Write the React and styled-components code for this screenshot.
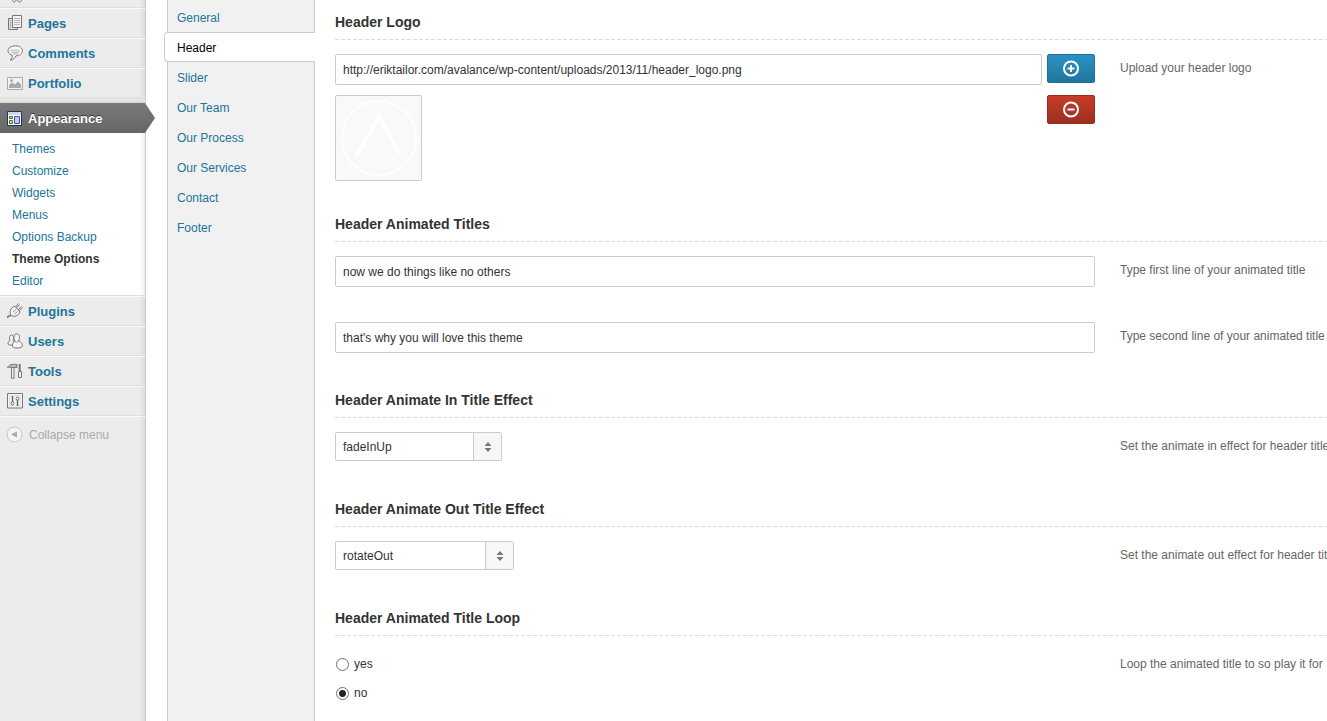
import React, { useState } from "react";
import styled, { createGlobalStyle, css } from "styled-components";

const GlobalStyle = createGlobalStyle`
  *, *::before, *::after { box-sizing: border-box; }
  body {
    margin: 0;
    background: #fff;
    color: #333;
    font-family: "Liberation Sans", Arial, sans-serif;
    font-size: 12px;
    overflow: hidden;
  }
  ul { list-style: none; margin: 0; padding: 0; }
  a { text-decoration: none; }
`;

const Page = styled.div`
  display: flex;
  min-height: 100vh;
`;

const Sidebar = styled.nav`
  flex: none;
  width: 146px;
  background: #ececec;
  border-right: 1px solid #ccc;
  box-shadow: inset -6px 0 6px -6px rgba(0, 0, 0, 0.16);
`;

const CutItem = styled.div`
  height: 8px;
  padding-left: 12px;
  border-bottom: 1px solid #dfdfdf;
  svg { display: block; }
`;

const menuRow = css`
  display: flex;
  align-items: center;
  gap: 5px;
  height: 30px;
  padding-left: 7px;
  font-size: 13px;
  font-weight: bold;
  svg { flex: none; }
`;

const MenuLink = styled.a`
  ${menuRow}
  color: #21759b;
  border-top: 1px solid #f9f9f9;
  border-bottom: 1px solid #dfdfdf;
`;

const Divider = styled.div`
  height: 5px;
  border-bottom: 1px solid #d4d4d4;
  background: #e4e4e4;
`;

const CurrentLink = styled.a`
  ${menuRow}
  position: relative;
  color: #fff;
  text-shadow: 0 -1px 0 #333;
  background: linear-gradient(#7a7a7a, #666);
  &::after {
    content: "";
    position: absolute;
    left: 100%;
    top: 0;
    width: 10px;
    height: 30px;
    background: inherit;
    clip-path: polygon(0 0, 100% 50%, 0 100%);
  }
`;

const Submenu = styled.ul`
  padding: 5px 0 3px;
  background: #fff;
  border-bottom: 1px solid #dfdfdf;
  box-shadow: inset -6px 0 6px -6px rgba(0, 0, 0, 0.16);
`;

const SubLink = styled.a`
  display: block;
  padding-left: 12px;
  line-height: 22px;
  color: ${(p) => (p.$current ? "#333" : "#21759b")};
  font-weight: ${(p) => (p.$current ? "bold" : "normal")};
`;

const Collapse = styled.button`
  display: flex;
  align-items: center;
  gap: 5px;
  width: 100%;
  height: 36px;
  padding: 0 0 0 6px;
  border: 0;
  border-top: 1px solid #f9f9f9;
  background: none;
  font: inherit;
  color: #aaa;
`;

const Tabs = styled.ul`
  flex: none;
  width: 148px;
  margin-left: 21px;
  padding-top: 2px;
  background: #f1f1f1;
  border: solid #ccc;
  border-width: 0 1px;
`;

const Tab = styled.a`
  display: block;
  height: 30px;
  padding-left: 9px;
  line-height: 32px;
  color: #21759b;
  ${(p) =>
    p.$current &&
    css`
      margin: 0 -1px 0 -4px;
      padding-left: 12px;
      line-height: 30px;
      color: #000;
      background: #fff;
      border: 1px solid #ccc;
      border-right: 0;
      border-radius: 4px 0 0 4px;
    `}
`;

const Content = styled.main`
  flex: 1;
  min-width: 0;
  padding: 10px 0 0 20px;
`;

const Heading = styled.h2`
  height: 30px;
  margin: 0 0 14px;
  padding-bottom: 6px;
  font-size: 14px;
  line-height: 24px;
  background: repeating-linear-gradient(90deg, #ddd 0 4px, transparent 4px 6px) bottom / 100% 1px no-repeat;
`;

const Field = styled.div`
  display: grid;
  grid-template-columns: minmax(0, 1fr) 207px;
  gap: 25px;
  margin-bottom: ${(p) => p.$gap || 35}px;
`;

const Hint = styled.p`
  margin: 0;
  padding-top: 4px;
  line-height: 20px;
  color: #666;
  white-space: nowrap;
`;

const TextInput = styled.input`
  display: block;
  width: 100%;
  height: 31px;
  padding: 0 7px;
  border: 1px solid #ccc;
  border-radius: 2px;
  background: #fff;
  font: inherit;
  color: #333;
`;

const Upload = styled.div`
  display: grid;
  grid-template-columns: minmax(0, 1fr) 48px;
  align-items: start;
  gap: 10px 5px;
`;

const IconButton = styled.button`
  display: flex;
  align-items: center;
  justify-content: center;
  height: 29px;
  padding: 0;
  border: 1px solid ${(p) => (p.$danger ? "#9a2b1e" : "#1f7099")};
  border-radius: 2px;
  background: ${(p) =>
    p.$danger ? "linear-gradient(#c83c28, #9a2f22)" : "linear-gradient(#2a93c4, #21759b)"};
`;

const Preview = styled.div`
  width: 87px;
  height: 86px;
  border: 1px solid #ccc;
  border-radius: 2px;
  background: #f9f9f9;
  svg { display: block; }
`;

const SelectBox = styled.div`
  display: grid;
  grid-template-columns: 1fr 28px;
  width: ${(p) => p.$width}px;
  height: 29px;
  margin-bottom: 1px;
  border: 1px solid #ccc;
  border-radius: 2px;
  background: #fff;
`;

const Select = styled.select`
  grid-area: 1 / 1 / 2 / 3;
  appearance: none;
  padding: 0 7px;
  border: 0;
  background: none;
  font: inherit;
  color: #333;
`;

const Arrows = styled.span`
  grid-area: 1 / 2;
  display: flex;
  align-items: center;
  justify-content: center;
  border-left: 1px solid #ccc;
  background: #f7f7f7;
  pointer-events: none;
`;

const Radios = styled.div`
  display: grid;
  gap: 9px;
  padding: 4px 0 0 1px;
`;

const RadioLabel = styled.label`
  display: flex;
  align-items: center;
  gap: 5px;
  line-height: 20px;
`;

const Radio = styled.input`
  appearance: none;
  width: 13px;
  height: 13px;
  margin: 0;
  border: 1px solid #707070;
  border-radius: 50%;
  background: #fff;
  &:checked {
    background: radial-gradient(circle, #222 0 3px, #fff 4px);
  }
`;

const Icon = ({ children }) => (
  <svg width="16" height="16" viewBox="0 0 16 16" fill="none" stroke="#777" aria-hidden="true">
    {children}
  </svg>
);

const icons = {
  pages: (
    <Icon>
      <path d="M5 3.500H1.500V14.500H10.500V13" fill="#ddd" />
      <path d="M5.500 0.500H14.500V12.500H5.500Z" fill="#f4f4f4" />
      <path d="M7 3.500H13M7 5.500H13M7 7.500H13M7 9.500H13M3.500 5V13" stroke="#b4b4b4" />
    </Icon>
  ),
  comments: (
    <Icon>
      <path d="M8.500 0.800C13 0.800 15.400 3 15.400 5.800C15.400 8.600 13 10.800 9 10.800C8 13.200 6.500 14.800 3 15.200C5 13.800 5.600 12.200 5.200 10.200C2.500 9.400 1 8 1 5.800C1 3 4 0.800 8.500 0.800Z" fill="#f6f6f6" />
      <path d="M3.500 5.500H13M4 7.500H12.500M6 9H11" stroke="#ccc" strokeWidth="1.500" />
    </Icon>
  ),
  portfolio: (
    <Icon>
      <path d="M0.500 2.500H15.500V14.500H0.500Z" fill="#f2f2f2" stroke="#aaa" />
      <path d="M2 13V10L5 7.500L8 9.500L11 6.500L14 9.500V13Z" fill="#aaa" stroke="none" />
      <circle cx="4.500" cy="5.500" r="1.500" fill="#aaa" stroke="none" />
    </Icon>
  ),
  appearance: (
    <Icon>
      <path d="M0.500 1.500H14.500V15.500H0.500Z" fill="#fff" stroke="#23355c" />
      <path d="M1 2H14V5H1Z" fill="#c9d8f0" stroke="none" />
      <path d="M2.500 6.500H5.500V8.500H2.500ZM2.500 10.500H5.500V13.500H2.500Z" fill="#b4e48a" stroke="#3e7a38" />
      <path d="M7.500 6.500H12.500V13.500H7.500Z" fill="#c4c8f6" stroke="#4650a0" />
    </Icon>
  ),
  plugins: (
    <Icon>
      <path d="M0.500 15C1 11.500 3 14 4.500 11.500" strokeWidth="1.500" />
      <path d="M4 12.500C2 9 3.500 5 7.500 3L13 9C11.500 12.500 7.500 14.500 4 12.500Z" fill="#f4f4f4" />
      <path d="M9 4.500L12 1M11.500 7.500L15 4" strokeWidth="2" />
      <path d="M9 4.500L12 1M11.500 7.500L15 4" stroke="#ddd" strokeWidth="1" />
      <path d="M6 9L9 6.500M7.500 11L10.500 8.500" stroke="#999" />
    </Icon>
  ),
  users: (
    <Icon>
      <path d="M6 12H2C0.500 11 0.500 8.500 3 7.500C1.800 5 2.500 2 4.500 2C6.500 2 7.200 4.500 6 7.500L8 9Z" fill="#f4f4f4" />
      <path d="M8 8C6 4.500 7 0.800 9.800 0.800C12.600 0.800 13.200 4.800 11.500 8C14.500 9 16 11 15.200 13.500C13 15.600 7.500 15.600 5.500 13.500C5 11 6 9 8 8Z" fill="#f4f4f4" />
      <path d="M8 8.500C9.500 9.500 10.500 9.500 11.500 8.500" stroke="#999" />
    </Icon>
  ),
  tools: (
    <Icon>
      <path d="M0.500 4.500C2 1.500 5 1 10 1.500V4.500H3C2 4 1.500 4.500 0.500 4.500Z" fill="#bbb" />
      <path d="M4.500 4.500H7V15.300H4.500Z" fill="#f2f2f2" />
      <path d="M12.700 1V8" strokeWidth="2" />
      <path d="M11.500 8.500H14.500V14.500H11.500Z" fill="#f2f2f2" />
    </Icon>
  ),
  settings: (
    <Icon>
      <path d="M0.500 0.500H15.500V15H0.500Z" fill="#f6f6f6" />
      <path d="M2.500 2.500H13.500V13H2.500Z" stroke="#ddd" />
      <path d="M5.500 3V9M10.500 7V13" stroke="#666" strokeWidth="1.500" />
      <circle cx="5.500" cy="10.500" r="1.500" fill="#fff" stroke="#666" />
      <circle cx="10.500" cy="5.500" r="1.500" fill="#fff" stroke="#666" />
    </Icon>
  ),
};

const RoundSign = ({ plus }) => (
  <svg width="18" height="18" viewBox="0 0 18 18" fill="none" stroke="#fff" strokeWidth="2" aria-hidden="true">
    <circle cx="9" cy="8.500" r="7" />
    <path d={plus ? "M5.500 8.500H12.500M9 5V12" : "M5.500 8.500H12.500"} />
  </svg>
);

const MenuItem = ({ icon, children }) => (
  <li>
    <MenuLink href="#">
      {icons[icon]}
      {children}
    </MenuLink>
  </li>
);

const Dropdown = ({ id, width, options }) => (
  <SelectBox $width={width}>
    <Arrows>
      <svg width="8" height="12" viewBox="0 0 8 12" fill="#777" aria-hidden="true">
        <path d="M4 1L7.500 5H0.500ZM4 11L7.500 7H0.500Z" />
      </svg>
    </Arrows>
    <Select id={id}>
      {options.map((o) => (
        <option key={o}>{o}</option>
      ))}
    </Select>
  </SelectBox>
);

const submenu = ["Themes", "Customize", "Widgets", "Menus", "Options Backup", "Theme Options", "Editor"];
const tabs = ["General", "Header", "Slider", "Our Team", "Our Process", "Our Services", "Contact", "Footer"];

export default function App() {
  const [loop, setLoop] = useState("no");
  return (
    <>
      <GlobalStyle />
      <Page>
        <Sidebar>
          <CutItem>
            <svg width="10" height="3" viewBox="0 0 10 3" fill="none" stroke="#777" aria-hidden="true">
              <path d="M0.500 0C0.500 2.500 4 2.500 4 0M5.500 0C5.500 2.500 9.500 2.500 9.500 0" />
            </svg>
          </CutItem>
          <ul>
            <MenuItem icon="pages">Pages</MenuItem>
            <MenuItem icon="comments">Comments</MenuItem>
            <MenuItem icon="portfolio">Portfolio</MenuItem>
          </ul>
          <Divider />
          <CurrentLink href="#">
            {icons.appearance}
            Appearance
          </CurrentLink>
          <Submenu>
            {submenu.map((s) => (
              <li key={s}>
                <SubLink href="#" $current={s === "Theme Options"}>{s}</SubLink>
              </li>
            ))}
          </Submenu>
          <ul>
            <MenuItem icon="plugins">Plugins</MenuItem>
            <MenuItem icon="users">Users</MenuItem>
            <MenuItem icon="tools">Tools</MenuItem>
            <MenuItem icon="settings">Settings</MenuItem>
          </ul>
          <Collapse type="button">
            <svg width="18" height="18" viewBox="0 0 18 18" aria-hidden="true">
              <circle cx="8.500" cy="8.500" r="7.500" fill="#f4f4f4" stroke="#c4c4c4" />
              <path d="M11 5.500V11.500L5 8.500Z" fill="#aaa" />
            </svg>
            Collapse menu
          </Collapse>
        </Sidebar>

        <Tabs>
          {tabs.map((t) => (
            <li key={t}>
              <Tab href="#" $current={t === "Header"}>{t}</Tab>
            </li>
          ))}
        </Tabs>

        <Content>
          <Heading>Header Logo</Heading>
          <Field $gap={31}>
            <Upload>
              <TextInput
                id="logo"
                defaultValue="http://eriktailor.com/avalance/wp-content/uploads/2013/11/header_logo.png"
              />
              <IconButton type="button" aria-label="Add"><RoundSign plus /></IconButton>
              <Preview>
                <svg width="85" height="84" viewBox="0 0 85 84" fill="none" stroke="#fff" aria-hidden="true">
                  <circle cx="43" cy="42" r="37" strokeWidth="2" />
                  <path d="M20 60L43 21L64 58" strokeWidth="4" />
                </svg>
              </Preview>
              <IconButton type="button" aria-label="Remove" $danger><RoundSign /></IconButton>
            </Upload>
            <Hint as="label" htmlFor="logo">Upload your header logo</Hint>
          </Field>

          <Heading>Header Animated Titles</Heading>
          <Field>
            <TextInput id="first" defaultValue="now we do things like no others" />
            <Hint as="label" htmlFor="first">Type first line of your animated title</Hint>
          </Field>
          <Field>
            <TextInput id="second" defaultValue="that's why you will love this theme" />
            <Hint as="label" htmlFor="second">Type second line of your animated title</Hint>
          </Field>

          <Heading>Header Animate In Title Effect</Heading>
          <Field>
            <Dropdown id="in" width={167} options={["fadeInUp"]} />
            <Hint as="label" htmlFor="in">Set the animate in effect for header title</Hint>
          </Field>

          <Heading>Header Animate Out Title Effect</Heading>
          <Field>
            <Dropdown id="out" width={179} options={["rotateOut"]} />
            <Hint as="label" htmlFor="out">Set the animate out effect for header title</Hint>
          </Field>

          <Heading>Header Animated Title Loop</Heading>
          <Field>
            <Radios>
              {["yes", "no"].map((v) => (
                <RadioLabel key={v}>
                  <Radio type="radio" name="loop" checked={loop === v} onChange={() => setLoop(v)} />
                  {v}
                </RadioLabel>
              ))}
            </Radios>
            <Hint>Loop the animated title to so play it for</Hint>
          </Field>
        </Content>
      </Page>
    </>
  );
}
